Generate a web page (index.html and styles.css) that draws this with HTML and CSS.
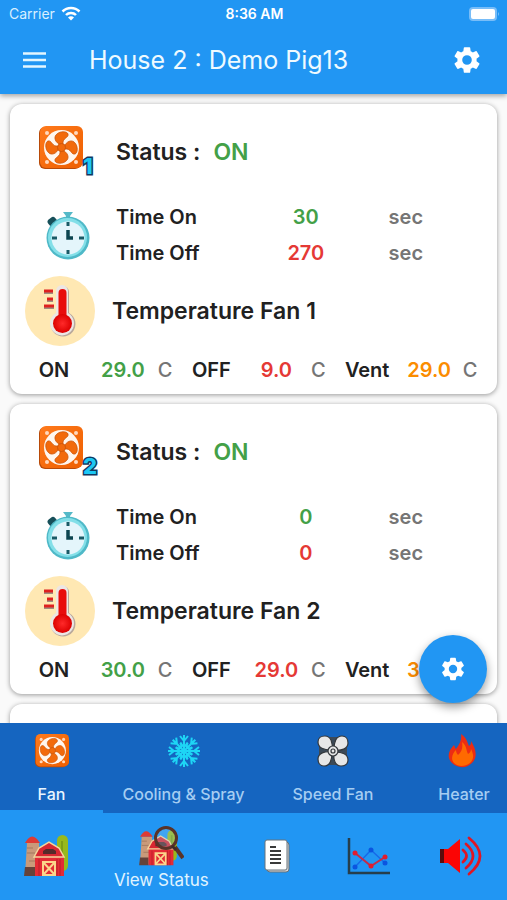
FILE: index.html
```
<!DOCTYPE html>
<html lang="en">
<head>
    <meta charset="UTF-8">
    <meta name="viewport" content="width=device-width, initial-scale=1.0">
    <title>House 2 : Demo Pig13</title>
    <link rel="stylesheet" href="styles.css">
</head>
<body>
    <!-- Shared icons -->
    <svg class="sprite" aria-hidden="true">
        <defs>
            <linearGradient id="orange" x1="0" y1="0" x2="1" y2="1">
                <stop offset="0" stop-color="#ff7a1c"/>
                <stop offset="1" stop-color="#ee5f00"/>
            </linearGradient>
            <radialGradient id="bulb">
                <stop offset="0" stop-color="#ff2a2a"/>
                <stop offset="1" stop-color="#dc0000"/>
            </radialGradient>
        </defs>
        <symbol id="gear" viewBox="0 0 24 24">
            <path fill="currentColor" d="M19.14 12.94c.04-.3.06-.61.06-.94s-.02-.64-.07-.94l2.03-1.58a.49.49 0 0 0 .12-.61l-1.92-3.32a.488.488 0 0 0-.59-.22l-2.39.96c-.5-.38-1.03-.7-1.62-.94l-.36-2.54a.484.484 0 0 0-.48-.41h-3.84c-.24 0-.43.17-.47.41l-.36 2.54c-.59.24-1.13.57-1.62.94l-2.39-.96c-.22-.08-.47 0-.59.22L2.74 8.87c-.12.21-.08.47.12.61l2.03 1.58c-.05.3-.09.63-.09.94s.02.64.07.94l-2.03 1.58a.49.49 0 0 0-.12.61l1.92 3.32c.12.22.37.29.59.22l2.39-.96c.5.38 1.03.7 1.62.94l.36 2.54c.05.24.24.41.48.41h3.84c.24 0 .44-.17.47-.41l.36-2.54c.59-.24 1.13-.56 1.62-.94l2.39.96c.22.08.47 0 .59-.22l1.92-3.32c.12-.22.07-.47-.12-.61l-2.01-1.58zM12 15.6A3.6 3.6 0 1 1 12 8.4a3.6 3.6 0 0 1 0 7.2z"/>
        </symbol>
        <symbol id="fan" viewBox="0 0 44 44">
            <rect x="0" y="1" width="42" height="42" rx="6" fill="#b84a08"/>
            <rect x="1" y="0" width="43" height="42" rx="6" fill="url(#orange)"/>
            <g fill="#ffd9bd">
                <circle cx="8" cy="7" r="2"/><circle cx="37" cy="7" r="2"/>
                <circle cx="8" cy="36" r="2"/><circle cx="37" cy="36" r="2"/>
            </g>
            <circle cx="22.500" cy="21.500" r="17.500" fill="#fff6ee"/>
            <g fill="#f26a0c" stroke="#c9540a" stroke-width=".8">
                <path id="blade" d="M20 18C15 15 15 10 18 8c3-3 10-3 11 0 1 4-6 4-5 10z"/>
                <use href="#blade" transform="rotate(90 22.500 21.500)"/>
                <use href="#blade" transform="rotate(180 22.500 21.500)"/>
                <use href="#blade" transform="rotate(270 22.500 21.500)"/>
                <circle cx="22.500" cy="21.500" r="4"/>
            </g>
        </symbol>
        <symbol id="clock" viewBox="0 0 44 50">
            <path d="M17 2h10l-3 4v4h-4V6z" fill="#55b9c8"/>
            <rect x="2" y="8" width="9" height="8" rx="3" fill="#174f59" transform="rotate(-40 6 12)"/>
            <circle cx="22" cy="28" r="21.500" fill="#4fb9c8"/>
            <circle cx="21.500" cy="27.500" r="19.500" fill="#83dfe8"/>
            <circle cx="22" cy="28" r="16.500" fill="#e4f5fb"/>
            <path d="M22 12v4M22 40v4M6 28h5M33 28h5" stroke="#195a66" stroke-width="3"/>
            <path d="M22 20v8h5" fill="none" stroke="#0c4550" stroke-width="3.500"/>
        </symbol>
        <symbol id="thermometer" viewBox="0 0 70 70">
            <circle cx="35" cy="35" r="35" fill="#ffe8b3"/>
            <path d="M32 16a6 6 0 0 1 12 0v21a12.500 12.500 0 1 1-12 0z" fill="#b9a99b"/>
            <path d="M31 15a6 6 0 0 1 12 0v22a12 12 0 1 1-12 0z" fill="#ece6e4"/>
            <path d="M33.500 17a3.500 3.500 0 0 1 8 0v22h-8z" fill="#e80c0c"/>
            <circle cx="37.500" cy="47.500" r="9.500" fill="url(#bulb)"/>
            <path d="M19 16h9M22 24h6M19 31h10" stroke="#a08d80" stroke-width="4"/>
            <path d="M19 15h9M22 23h6M19 30h10" stroke="#df2020" stroke-width="3"/>
        </symbol>
        <symbol id="barn" viewBox="0 0 44 42">
            <rect x="33" y="0" width="11" height="36" rx="5.500" fill="#98b91b"/>
            <path d="M38 6v29" stroke="#7c9d17" stroke-width="2"/>
            <path d="M3 8h12l1 32H1z" fill="#c99a7a"/>
            <path d="M3 18h8M5 26h8M3 13h6" stroke="#a3795e"/>
            <path d="M1 32h10v9H0z" fill="#65423a"/>
            <path d="M1 8Q8-5 16 8z" fill="#dd3b35"/>
            <path d="M11 22l4-9 10-6 10 6 5 9v19H11z" fill="#e32b35"/>
            <path d="M15 24v17M36 24v17M33 24v17" stroke="#b91f2a"/>
            <path d="M10 22l5-9 10-6 10 6 5 9z" fill="#d82731" stroke="#f5d69b" stroke-width="1.500"/>
            <path d="M19 19v-3l3-2h7l3 2v3z" fill="#552a2a"/>
            <path d="M19 27h12v13H19zM19 27l12 13M31 27L19 40" fill="none" stroke="#fbd58b" stroke-width="2"/>
        </symbol>
    </svg>

    <div class="app">
        <header class="header">
            <div class="status-bar">
                <span class="carrier">Carrier
                    <svg width="20" height="15" viewBox="0 0 20 15" fill="none" stroke="#fff" stroke-width="2.500" aria-hidden="true">
                        <path d="M1.500 5.500a12 12 0 0 1 17 0M5 9a7 7 0 0 1 10 0"/>
                        <path d="M7 11.500a4.200 4.200 0 0 1 6 0L10 14.500z" fill="#fff" stroke="none"/>
                    </svg>
                </span>
                <span class="clock-time">8:36 AM</span>
                <svg class="battery" width="32" height="14" viewBox="0 0 32 14" aria-hidden="true">
                    <rect x="1" y="0" width="28" height="14" rx="4" fill="#78bdf8"/>
                    <rect x="3" y="2" width="24" height="10" rx="2" fill="#fff"/>
                    <path d="M30 5q2 2 0 4z" fill="#78bdf8"/>
                </svg>
            </div>
            <div class="app-bar">
                <button class="icon-button" type="button" aria-label="Menu">
                    <svg width="24" height="16" viewBox="0 0 24 16" aria-hidden="true">
                        <path d="M0 1.500h23M0 8h23M0 14.500h23" stroke="#e3f6ff" stroke-width="2.500"/>
                    </svg>
                </button>
                <h1>House 2 : Demo Pig13</h1>
                <button class="icon-button" type="button" aria-label="Settings">
                    <svg width="32" height="32" aria-hidden="true"><use href="#gear"/></svg>
                </button>
            </div>
        </header>

        <main class="content">
            <div class="cards">
                <section class="card">
                    <div class="status-row">
                        <div class="fan-icon">
                            <svg width="44" height="44" aria-hidden="true"><use href="#fan"/></svg>
                            <span class="fan-number">1</span>
                        </div>
                        <h2>Status :</h2>
                        <span class="status-value on">ON</span>
                    </div>
                    <div class="time-row">
                        <svg class="clock-icon" width="44" height="50" aria-hidden="true"><use href="#clock"/></svg>
                        <table>
                            <tr><th scope="row">Time On</th><td class="on">30</td><td class="unit">sec</td></tr>
                            <tr><th scope="row">Time Off</th><td class="off">270</td><td class="unit">sec</td></tr>
                        </table>
                    </div>
                    <div class="temp-row">
                        <svg width="70" height="70" aria-hidden="true"><use href="#thermometer"/></svg>
                        <h2>Temperature Fan 1</h2>
                    </div>
                    <div class="values">
                        <span>ON</span><span class="on">29.0</span><span class="unit">C</span>
                        <span>OFF</span><span class="off">9.0</span><span class="unit">C</span>
                        <span>Vent</span><span class="vent">29.0</span><span class="unit">C</span>
                    </div>
                </section>

                <section class="card">
                    <div class="status-row">
                        <div class="fan-icon">
                            <svg width="44" height="44" aria-hidden="true"><use href="#fan"/></svg>
                            <span class="fan-number">2</span>
                        </div>
                        <h2>Status :</h2>
                        <span class="status-value on">ON</span>
                    </div>
                    <div class="time-row">
                        <svg class="clock-icon" width="44" height="50" aria-hidden="true"><use href="#clock"/></svg>
                        <table>
                            <tr><th scope="row">Time On</th><td class="on">0</td><td class="unit">sec</td></tr>
                            <tr><th scope="row">Time Off</th><td class="off">0</td><td class="unit">sec</td></tr>
                        </table>
                    </div>
                    <div class="temp-row">
                        <svg width="70" height="70" aria-hidden="true"><use href="#thermometer"/></svg>
                        <h2>Temperature Fan 2</h2>
                    </div>
                    <div class="values">
                        <span>ON</span><span class="on">30.0</span><span class="unit">C</span>
                        <span>OFF</span><span class="off">29.0</span><span class="unit">C</span>
                        <span>Vent</span><span class="vent vent-start">3</span>
                    </div>
                </section>

                <section class="card next-card"></section>
            </div>
            <button class="fab" type="button" aria-label="Fan settings">
                <svg width="28" height="28" aria-hidden="true"><use href="#gear"/></svg>
            </button>
        </main>

        <nav class="tabs" aria-label="Equipment">
            <a href="#fan-tab" class="tab tab-fan active" aria-current="page">
                <svg width="34" height="34" aria-hidden="true"><use href="#fan"/></svg>
                <span>Fan</span>
            </a>
            <a href="#cooling" class="tab tab-cooling">
                <svg width="34" height="34" viewBox="0 0 34 34" fill="none" stroke="#1ed5f5" stroke-width="2" aria-hidden="true">
                    <g id="arm"><path d="M17 17V1M13 2l4 5 4-5M13 9l4 4 4-4"/></g>
                    <use href="#arm" transform="rotate(45 17 17)"/>
                    <use href="#arm" transform="rotate(90 17 17)"/>
                    <use href="#arm" transform="rotate(135 17 17)"/>
                    <use href="#arm" transform="rotate(180 17 17)"/>
                    <use href="#arm" transform="rotate(225 17 17)"/>
                    <use href="#arm" transform="rotate(270 17 17)"/>
                    <use href="#arm" transform="rotate(315 17 17)"/>
                </svg>
                <span>Cooling &amp; Spray</span>
            </a>
            <a href="#speed-fan" class="tab tab-speed">
                <svg width="34" height="34" viewBox="0 0 34 34" aria-hidden="true">
                    <rect x="3" y="3" width="28" height="28" rx="7" fill="#3c4a58"/>
                    <g fill="#e7e7e7" stroke="#34383c" stroke-width="1.200">
                        <path id="petal" d="M15 16C8 16 2 14 2 8c0-4 3-6 7-6 6 0 8 7 7 14z"/>
                        <use href="#petal" transform="rotate(90 17 17)"/>
                        <use href="#petal" transform="rotate(180 17 17)"/>
                        <use href="#petal" transform="rotate(270 17 17)"/>
                        <circle cx="17" cy="17" r="5"/>
                        <circle cx="17" cy="17" r="2"/>
                    </g>
                </svg>
                <span>Speed Fan</span>
            </a>
            <a href="#heater" class="tab tab-heater">
                <svg width="34" height="34" viewBox="0 0 34 34" aria-hidden="true">
                    <path d="M14 0c6 4 6 8 8 12 2-1 2-3 2-5 5 8 7 16 1 22-6 6-15 5-20 0-6-6-3-13 2-18 1 2 1 3 2 4 4-5 6-10 5-15z" fill="#ec2d13"/>
                    <path d="M15 8c5 4 4 8 6 12 2-1 3-3 3-5 3 6 3 10-1 14-5 4-12 4-16 0-4-5-1-10 2-13 0 2 1 4 2 5 4-3 5-8 4-13z" fill="#ff6a00"/>
                </svg>
                <span>Heater</span>
            </a>
        </nav>

        <nav class="bottom-nav" aria-label="Main">
            <a href="#farm" aria-label="Farm">
                <svg width="44" height="42" aria-hidden="true"><use href="#barn"/></svg>
            </a>
            <a href="#status" class="selected">
                <svg width="46" height="42" viewBox="0 0 46 42" aria-hidden="true">
                    <use href="#barn" x="1" y="5" width="38" height="36"/>
                    <path d="M37 22l8 11" stroke="#5a3328" stroke-width="4"/>
                    <circle cx="28" cy="13" r="10.500" fill="#9fd2f0" fill-opacity=".25" stroke="#5a3328" stroke-width="3"/>
                    <path d="M34 21l4 4" stroke="#3f2a28" stroke-width="3"/>
                </svg>
                <span>View Status</span>
            </a>
            <a href="#report" aria-label="Report">
                <svg width="26" height="34" viewBox="0 0 26 34" aria-hidden="true">
                    <rect x="3" y="3" width="22" height="30" rx="3" fill="#d4d4d4" stroke="#68727a"/>
                    <rect x="1" y="1" width="22" height="30" rx="2" fill="#fff" stroke="#68727a"/>
                    <path d="M6 8h6M6 12h11M6 16h11M6 20h11M6 24h11" stroke="#3a3a3a" stroke-width="2"/>
                </svg>
            </a>
            <a href="#chart" aria-label="Chart">
                <svg width="44" height="38" viewBox="0 0 44 38" fill="none" aria-hidden="true">
                    <path d="M2 1v35h41" stroke="#263e4b" stroke-width="2.500"/>
                    <path d="M8 30l16-17 14 13" stroke="#1769e8" stroke-width="1.500"/>
                    <path d="M8 16l16 13 14-9" stroke="#c52b48" stroke-width="2"/>
                    <g fill="#0b55e0"><circle cx="8" cy="30" r="2.500"/><circle cx="24" cy="13" r="2.500"/><circle cx="38" cy="26" r="2.500"/></g>
                    <g fill="#e11c2d"><circle cx="8" cy="16" r="2.500"/><circle cx="24" cy="29" r="2.500"/><circle cx="38" cy="20" r="2.500"/></g>
                </svg>
            </a>
            <a href="#alarm" aria-label="Alarm">
                <svg width="44" height="40" viewBox="0 0 44 40" fill="none" aria-hidden="true">
                    <path d="M1 13h4v14H1z" fill="#5c0c0c"/>
                    <path d="M5 13h4L21 3v34L9 27H5z" fill="#fb0505"/>
                    <path d="M24 14q7 6 0 12M27 8q14 12 0 24M30 2q22 18 0 36" stroke="#df1624" stroke-width="2.800" stroke-linecap="round"/>
                </svg>
            </a>
        </nav>
    </div>
</body>
</html>
```
FILE: styles.css
```
* {
    box-sizing: border-box;
}
body {
    margin: 0;
    font-family: Inter, "Liberation Sans", sans-serif;
    background-color: #fafafa;
    color: #212121;
}
button {
    padding: 0;
    border: 0;
    background: none;
    color: #fff;
    cursor: pointer;
}
a {
    color: inherit;
    text-decoration: none;
}
svg {
    display: block;
    flex-shrink: 0;
}
h1, h2 {
    margin: 0;
}
.sprite {
    position: absolute;
    width: 0;
    height: 0;
}
.app {
    display: flex;
    flex-direction: column;
    height: 100vh;
}

/* Header */
.header {
    position: relative;
    z-index: 1;
    background: #2196f3;
    color: #fff;
    box-shadow: 0 2px 5px rgba(0, 0, 0, 0.35);
}
.status-bar {
    display: grid;
    grid-template-columns: 1fr auto 1fr;
    align-items: center;
    height: 27px;
    padding: 0 7px 0 9px;
}
.carrier {
    display: flex;
    align-items: center;
    gap: 6px;
    font-size: 14px;
    color: #d8efff;
}
.clock-time {
    font-size: 14px;
    font-weight: 600;
}
.battery {
    justify-self: end;
}
.app-bar {
    display: flex;
    align-items: center;
    height: 67px;
    padding: 0 5px 2px 0;
}
.app-bar h1 {
    flex: 1;
    padding-left: 19px;
    font-size: 25px;
    font-weight: 400;
    color: #eefaff;
}
.icon-button {
    display: flex;
    align-items: center;
    justify-content: center;
    width: 70px;
    height: 48px;
}

/* Cards */
.content {
    position: relative;
    flex: 1;
    min-height: 0;
}
.cards {
    display: flex;
    flex-direction: column;
    gap: 10px;
    height: 100%;
    padding: 10px;
    overflow: hidden;
}
.card {
    flex-shrink: 0;
    padding-bottom: 5px;
    background: #fff;
    border-radius: 12px;
    box-shadow: 0 1px 5px rgba(0, 0, 0, 0.4);
    font-size: 20px;
    font-weight: 600;
}
.next-card {
    min-height: 290px;
}
.card h2 {
    font-size: 23px;
    font-weight: 600;
}
.on {
    color: #43a047;
}
.off {
    color: #e53935;
}
.vent {
    color: #fb8c00;
}
.unit {
    color: #757575;
}
.status-row {
    display: flex;
    align-items: center;
    height: 95px;
    padding-left: 29px;
}
.fan-icon {
    position: relative;
    width: 77px;
    padding-bottom: 8px;
}
.fan-number {
    position: absolute;
    left: 44px;
    bottom: 0;
    font-size: 22px;
    font-weight: 800;
    line-height: 24px;
    color: #1cc8f5;
    -webkit-text-stroke: 3px #12385f;
    paint-order: stroke fill;
}
.status-value {
    margin-left: 13px;
    font-size: 23px;
}
.time-row {
    display: flex;
    align-items: center;
    padding: 0 42px 0 36px;
}
.time-row table {
    flex: 1;
    margin-left: 26px;
    border-collapse: collapse;
}
.time-row th {
    width: 41%;
    height: 36px;
    padding: 0;
    font-weight: 600;
    text-align: left;
}
.time-row td {
    width: 30%;
    padding: 0;
    text-align: center;
}
.time-row .unit {
    width: 29%;
}
.temp-row {
    display: flex;
    align-items: center;
    gap: 17px;
    height: 80px;
    padding-left: 15px;
}
.values {
    display: grid;
    grid-template-columns: 68fr 70fr 14fr 78fr 52fr 32fr 66fr 58fr 24fr;
    align-items: center;
    justify-items: center;
    height: 38px;
    padding: 0 15px 0 10px;
}
.values .unit {
    font-weight: 500;
}
.vent-start {
    justify-self: start;
    padding-left: 7px;
}
.fab {
    position: absolute;
    right: 20px;
    bottom: 20px;
    display: flex;
    align-items: center;
    justify-content: center;
    width: 68px;
    height: 68px;
    border-radius: 50%;
    background: #2196f3;
    box-shadow: 0 4px 10px rgba(0, 0, 0, 0.4);
}

/* Tabs */
.tabs {
    display: flex;
    height: 90px;
    background: #1565c0;
    overflow: hidden;
}
.tab {
    display: flex;
    flex-direction: column;
    flex-shrink: 0;
    align-items: center;
    gap: 15px;
    padding-top: 11px;
    border-bottom: 3px solid transparent;
    color: #a5cdf2;
    font-size: 16px;
    font-weight: 500;
    line-height: 22px;
}
.tab.active {
    border-bottom-color: #2196f3;
    color: #e8f5ff;
}
.tab-fan {
    width: 103px;
}
.tab-cooling {
    width: 161px;
}
.tab-speed {
    width: 138px;
}
.tab-heater {
    width: 124px;
}

/* Bottom navigation */
.bottom-nav {
    display: flex;
    height: 87px;
    background: #2196f3;
    color: #e0f4ff;
    font-size: 17px;
    line-height: 22px;
}
.bottom-nav a {
    display: flex;
    flex: 2;
    flex-direction: column;
    align-items: center;
    justify-content: center;
    gap: 2px;
    padding-bottom: 2px;
}
.bottom-nav .selected {
    flex: 3;
    padding: 3px 0 0;
}
```
